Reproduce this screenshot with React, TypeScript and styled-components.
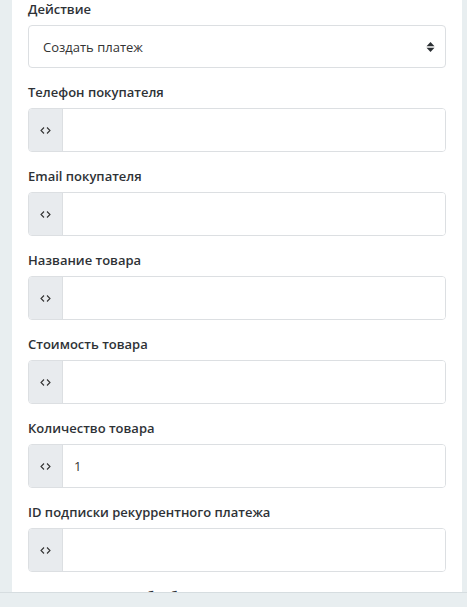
import styled, { createGlobalStyle } from "styled-components"

const GlobalStyle = createGlobalStyle`
    html, body {
        margin: 0;
        padding: 0;
        height: 100%;
        overflow: hidden;
        background: #e8eef0;
    }
    body {
        font-family: "Open Sans", "Noto Sans", "Liberation Sans", sans-serif;
        font-size: 13px;
        color: #333;
    }
`

const fields = [
    { label: "Телефон покупателя", value: "" },
    { label: "Email покупателя", value: "" },
    { label: "Название товара", value: "" },
    { label: "Стоимость товара", value: "" },
    { label: "Количество товара", value: "1" },
    { label: "ID подписки рекуррентного платежа", value: "" },
    { label: "Дата окончания обработки", value: "" },
]

const CodeIcon = () => (
    <svg width="11" height="7" viewBox="0 0 11 7" fill="none" stroke="#333" strokeWidth="1.1">
        <path d="M4 0.5 L1 3.5 L4 6.5" />
        <path d="M7 0.5 L10 3.5 L7 6.5" />
    </svg>
)

const SortIcon = () => (
    <svg width="9" height="10" viewBox="0 0 9 10" fill="#2b2f33">
        <path d="M4.5 0 L8.5 4.2 L0.5 4.2 Z" />
        <path d="M4.5 10 L8.5 5.8 L0.5 5.8 Z" />
    </svg>
)

const App = () => {
    return <>
        <GlobalStyle />
        <Page>
            <Panel>
                <Group>
                    <Label>Действие</Label>
                    <SelectBox>
                        <span>Создать платеж</span>
                        <SortIcon />
                    </SelectBox>
                </Group>
                {fields.map(f => (
                    <Group key={f.label}>
                        <Label>{f.label}</Label>
                        <InputGroup>
                            <Addon><CodeIcon /></Addon>
                            <Input defaultValue={f.value} />
                        </InputGroup>
                    </Group>
                ))}
            </Panel>
        </Page>
        <Footer />
    </>
}

const Page = styled.div`
    height: 100vh;
    overflow: hidden;
    padding-left: 12px;
`

const Panel = styled.div`
    width: 450px;
    min-height: 100%;
    background: #fff;
    box-sizing: border-box;
    padding: 0 16px;
`

const Group = styled.div`
    margin-bottom: 15px;
`

const Label = styled.div`
    font-weight: 600;
    line-height: 18px;
    margin-bottom: 7px;
    color: #2e3236;
`

const SelectBox = styled.div`
    height: 43px;
    box-sizing: border-box;
    border: 1px solid #dcdfe2;
    border-radius: 4px;
    display: flex;
    align-items: center;
    justify-content: space-between;
    padding: 0 10px 0 14px;
    color: #333;
`

const InputGroup = styled.div`
    display: flex;
    height: 44px;
    box-sizing: border-box;
    border: 1px solid #dcdfe2;
    border-radius: 4px;
    overflow: hidden;
`

const Addon = styled.div`
    width: 33px;
    flex: none;
    background: #e8ebee;
    border-right: 1px solid #dcdfe2;
    display: flex;
    align-items: center;
    justify-content: center;
`

const Input = styled.input`
    flex: 1;
    border: none;
    outline: none;
    padding: 0 11px;
    font: inherit;
    color: #333;
    background: #fff;
    min-width: 0;
`

const Footer = styled.div`
    position: fixed;
    left: 0;
    right: 0;
    bottom: 0;
    height: 14px;
    background: #e8eef0;
    border-top: 1px solid #d6dde0;
`

export default App
